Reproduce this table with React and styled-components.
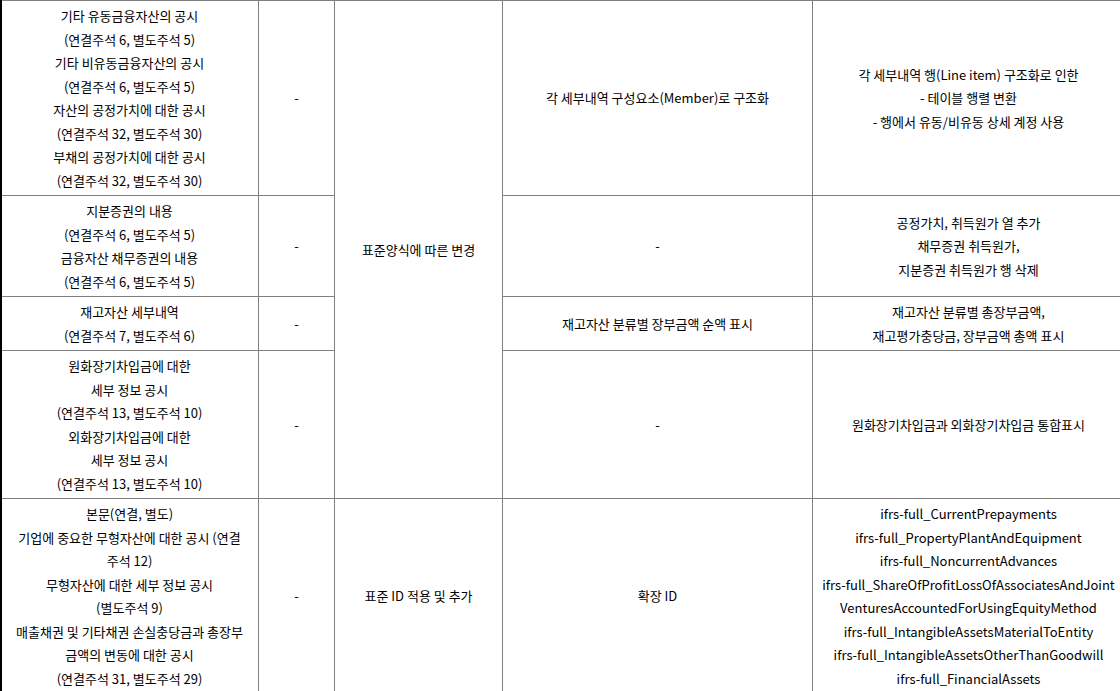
import React from 'react';
import styled, { createGlobalStyle } from 'styled-components';

const GlobalStyle = createGlobalStyle`
  html, body {
    margin: 0;
    padding: 0;
    background: #ffffff;
    overflow: hidden;
  }
  body {
    font-family: "Noto Sans CJK KR", "Noto Sans", sans-serif;
  }
`;

const Frame = styled.div`
  width: 1120px;
  height: 691px;
  overflow: hidden;
  border-left: 2px solid #000;
  box-sizing: border-box;
`;

const Table = styled.table`
  border-collapse: collapse;
  table-layout: fixed;
  width: 1124px;
  margin-left: -2px;
  font-size: 13px;
  line-height: 23.5px;
  color: #000;
`;

const Cell = styled.td`
  border: 1px solid #808080;
  padding: 3px 2px;
  text-align: center;
  vertical-align: middle;
  white-space: nowrap;
  overflow: hidden;
`;

const Line = styled.div`
  white-space: nowrap;
`;

const Lines = ({ items }) => (
  <>
    {items.map((t, i) => (
      <Line key={i}>{t}</Line>
    ))}
  </>
);

const rows = [
  {
    disclosure: [
      '기타 유동금융자산의 공시',
      '(연결주석 6, 별도주석 5)',
      '기타 비유동금융자산의 공시',
      '(연결주석 6, 별도주석 5)',
      '자산의 공정가치에 대한 공시',
      '(연결주석 32, 별도주석 30)',
      '부채의 공정가치에 대한 공시',
      '(연결주석 32, 별도주석 30)',
    ],
    structure: ['각 세부내역 구성요소(Member)로 구조화'],
    detail: [
      '각 세부내역 행(Line item) 구조화로 인한',
      '- 테이블 행렬 변환',
      '- 행에서 유동/비유동 상세 계정 사용',
    ],
  },
  {
    disclosure: [
      '지분증권의 내용',
      '(연결주석 6, 별도주석 5)',
      '금융자산 채무증권의 내용',
      '(연결주석 6, 별도주석 5)',
    ],
    structure: ['-'],
    detail: ['공정가치, 취득원가 열 추가', '채무증권 취득원가,', '지분증권 취득원가 행 삭제'],
  },
  {
    disclosure: ['재고자산 세부내역', '(연결주석 7, 별도주석 6)'],
    structure: ['재고자산 분류별 장부금액 순액 표시'],
    detail: ['재고자산 분류별 총장부금액,', '재고평가충당금, 장부금액 총액 표시'],
  },
  {
    disclosure: [
      '원화장기차입금에 대한',
      '세부 정보 공시',
      '(연결주석 13, 별도주석 10)',
      '외화장기차입금에 대한',
      '세부 정보 공시',
      '(연결주석 13, 별도주석 10)',
    ],
    structure: ['-'],
    detail: ['원화장기차입금과 외화장기차입금 통합표시'],
  },
];

const lastRow = {
  disclosure: [
    '본문(연결, 별도)',
    '기업에 중요한 무형자산에 대한 공시 (연결',
    '주석 12)',
    '무형자산에 대한 세부 정보 공시',
    '(별도주석 9)',
    '매출채권 및 기타채권 손실충당금과 총장부',
    '금액의 변동에 대한 공시',
    '(연결주석 31, 별도주석 29)',
  ],
  change: '표준 ID 적용 및 추가',
  structure: ['확장 ID'],
  detail: [
    'ifrs-full_CurrentPrepayments',
    'ifrs-full_PropertyPlantAndEquipment',
    'ifrs-full_NoncurrentAdvances',
    'ifrs-full_ShareOfProfitLossOfAssociatesAndJoint',
    'VenturesAccountedForUsingEquityMethod',
    'ifrs-full_IntangibleAssetsMaterialToEntity',
    'ifrs-full_IntangibleAssetsOtherThanGoodwill',
    'ifrs-full_FinancialAssets',
  ],
};

const App = () => {
  return (
    <>
      <GlobalStyle />
      <Frame>
        <Table>
          <colgroup>
            <col style={{ width: 258 }} />
            <col style={{ width: 76 }} />
            <col style={{ width: 168 }} />
            <col style={{ width: 310 }} />
            <col style={{ width: 312 }} />
          </colgroup>
          <tbody>
            {rows.map((r, i) => (
              <tr key={i}>
                <Cell>
                  <Lines items={r.disclosure} />
                </Cell>
                <Cell>-</Cell>
                {i === 0 && <Cell rowSpan={4}>표준양식에 따른 변경</Cell>}
                <Cell>
                  <Lines items={r.structure} />
                </Cell>
                <Cell>
                  <Lines items={r.detail} />
                </Cell>
              </tr>
            ))}
            <tr>
              <Cell>
                <Lines items={lastRow.disclosure} />
              </Cell>
              <Cell>-</Cell>
              <Cell>{lastRow.change}</Cell>
              <Cell>
                <Lines items={lastRow.structure} />
              </Cell>
              <Cell>
                <Lines items={lastRow.detail} />
              </Cell>
            </tr>
          </tbody>
        </Table>
      </Frame>
    </>
  );
};

export default App;
